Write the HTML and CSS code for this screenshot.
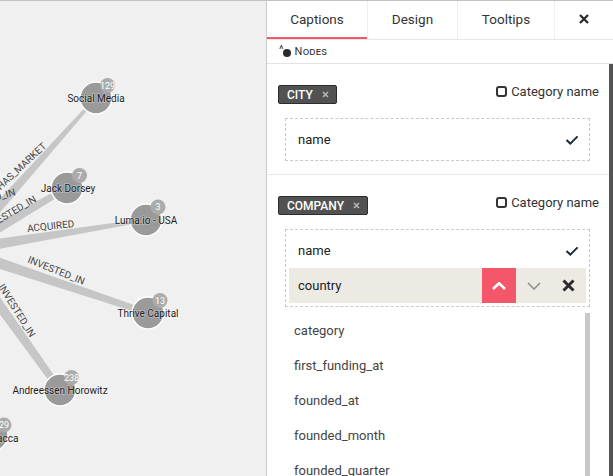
FILE: index.html
```html
<!DOCTYPE html>
<html>
<head>
<meta charset="utf-8">
<title>Graph captions</title>
<link rel="stylesheet" href="styles.css">
</head>
<body>
<div class="app">
  <div class="graph">
    <svg class="graph-svg" width="266" height="475" viewBox="0 1 266 475">
      <g class="edges">
        <polygon points="-35.5,254 97.1,99 94.9,97 -44.5,246"/>
        <polygon points="-37,255.2 68.5,190.6 65.5,185.4 -43,244.8"/>
        <polygon points="-39,255.9 146.2,221.5 145.8,218.5 -41,244.1"/>
        <polygon points="-41.9,255.7 147.05,315.84 148.95,310.16 -38.1,244.3"/>
        <polygon points="-44.9,253.5 57.15,392.03 62.85,387.97 -35.1,246.5"/>
      </g>
      <g class="edge-labels">
        <text text-anchor="end" transform="translate(47 147) rotate(-43)">HAS_MARKET</text>
        <text text-anchor="end" transform="translate(16 195) rotate(-16)">INVESTED_IN</text>
        <text text-anchor="end" transform="translate(37 201) rotate(-31)">INVESTED_IN</text>
        <text text-anchor="middle" transform="translate(51 229.5) rotate(-6)">ACQUIRED</text>
        <text text-anchor="middle" transform="translate(55 273.5) rotate(22)">INVESTED_IN</text>
        <text text-anchor="end" transform="translate(30 338) rotate(58)">INVESTED_IN</text>
      </g>
      <g class="node">
        <circle class="n-circle" cx="96" cy="98" r="16"/>
        <circle class="n-badge" cx="107.5" cy="85.5" r="7.5"/>
        <text class="n-count" x="107.5" y="88.5">129</text>
        <text class="n-label" x="96" y="101.5">Social Media</text>
      </g>
      <g class="node">
        <circle class="n-circle" cx="67" cy="188" r="16"/>
        <circle class="n-badge" cx="79.5" cy="175.5" r="7.5"/>
        <text class="n-count" x="79.5" y="178.5">7</text>
        <text class="n-label" x="68" y="191.5">Jack Dorsey</text>
      </g>
      <g class="node">
        <circle class="n-circle" cx="146" cy="220" r="16"/>
        <circle class="n-badge" cx="158" cy="207" r="7.5"/>
        <text class="n-count" x="158" y="210">3</text>
        <text class="n-label" x="146" y="223.5">Luma.io - USA</text>
      </g>
      <g class="node">
        <circle class="n-circle" cx="148" cy="313" r="16"/>
        <circle class="n-badge" cx="160" cy="300.5" r="7.5"/>
        <text class="n-count" x="160" y="303.5">13</text>
        <text class="n-label" x="148" y="316.5">Thrive Capital</text>
      </g>
      <g class="node">
        <circle class="n-circle" cx="60" cy="390" r="16"/>
        <circle class="n-badge" cx="71.5" cy="377.5" r="7.5"/>
        <text class="n-count" x="71.5" y="380.5">238</text>
        <text class="n-label" x="60" y="393.5">Andreessen Horowitz</text>
      </g>
      <g class="node">
        <circle class="n-circle" cx="-8" cy="435" r="16"/>
        <circle class="n-badge" cx="4" cy="425" r="7.5"/>
        <text class="n-count" x="4" y="428">29</text>
        <text class="n-label" x="-8" y="441.5">Chris Sacca</text>
      </g>
    </svg>
  </div>

  <div class="panel">
    <div class="tabs">
      <div class="tab tab-captions active">Captions</div>
      <div class="tab tab-design">Design</div>
      <div class="tab tab-tooltips">Tooltips</div>
      <div class="tab tab-close">
        <svg width="10" height="10" viewBox="0 0 10 10"><path d="M1 1L9 9M9 1L1 9" class="ico-close"/></svg>
      </div>
    </div>
    <div class="nodes-hd">
      <span class="nodes-icon"><span class="caret">^</span><span class="dot"></span></span>
      <span class="nodes-title">Nodes</span>
    </div>
    <div class="panel-body">
      <div class="scroll">
        <section class="cat">
          <div class="cat-head">
            <span class="tag">CITY <svg class="tag-x" width="7" height="7" viewBox="0 0 7 7"><path d="M1 1L6 6M6 1L1 6"/></svg></span>
            <label class="cb"><span class="box"></span>Category name</label>
          </div>
          <div class="props">
            <div class="prop">
              <span class="prop-name">name</span>
              <svg class="chk" width="14" height="10" viewBox="0 0 14 10"><polyline points="1.5,5 5.3,8.6 12.6,1.4"/></svg>
            </div>
          </div>
        </section>
        <section class="cat cat-company">
          <div class="cat-head">
            <span class="tag">COMPANY <svg class="tag-x" width="7" height="7" viewBox="0 0 7 7"><path d="M1 1L6 6M6 1L1 6"/></svg></span>
            <label class="cb"><span class="box"></span>Category name</label>
          </div>
          <div class="props">
            <div class="prop">
              <span class="prop-name">name</span>
              <svg class="chk" width="14" height="10" viewBox="0 0 14 10"><polyline points="1.5,5 5.3,8.6 12.6,1.4"/></svg>
            </div>
            <div class="prop prop-sel">
              <span class="prop-name">country</span>
              <span class="btn btn-up"><svg width="14" height="8" viewBox="0 0 14 8"><polyline points="1,7 7,1.2 13,7"/></svg></span>
              <span class="btn btn-down"><svg width="14" height="8" viewBox="0 0 14 8"><polyline points="1,1 7,7 13,1"/></svg></span>
              <span class="btn btn-del"><svg width="13" height="13" viewBox="0 0 13 13"><path d="M1.5 1.5L11.5 11.5M11.5 1.5L1.5 11.5"/></svg></span>
            </div>
          </div>
          <div class="dropdown">
            <ul class="dd-list">
              <li>category</li>
              <li>first_funding_at</li>
              <li>founded_at</li>
              <li>founded_month</li>
              <li>founded_quarter</li>
              <li>founded_year</li>
            </ul>
            <div class="dd-scroll"></div>
          </div>
        </section>
      </div>
      <div class="sbar"></div>
    </div>
  </div>
</div>
</body>
</html>
```
FILE: styles.css
```css
html, body {
  margin: 0;
  padding: 0;
}
body {
  border-top: 1px solid #c2c2c2;
  height: 475px;
  overflow: hidden;
  font-family: Roboto, "Noto Sans", sans-serif;
  background: #fff;
}
.app {
  display: flex;
  height: 475px;
}

/* graph canvas */
.graph {
  width: 266px;
  flex: none;
  background: #f0f0f0;
  overflow: hidden;
}
.graph-svg {
  display: block;
  font-family: Roboto, sans-serif;
}
.edges polygon {
  fill: #c6c6c6;
}
.edge-labels text {
  font-size: 10px;
  fill: #454545;
}
.n-circle {
  fill: #9a9a9a;
  stroke: #ffffff;
  stroke-width: 1.5;
}
.n-badge {
  fill: #ababab;
}
.n-count {
  font-size: 9px;
  fill: #ffffff;
  text-anchor: middle;
}
.n-label {
  font-size: 10px;
  fill: #1c1c1c;
  text-anchor: middle;
  stroke: rgba(255, 255, 255, 0.35);
  stroke-width: 1.5;
  paint-order: stroke;
}

/* side panel */
.panel {
  width: 346px;
  flex: none;
  border-left: 1px solid #cbcbcb;
  background: #fff;
  display: flex;
  flex-direction: column;
}
.tabs {
  display: flex;
  height: 38px;
  flex: none;
  border-bottom: 1px solid #e6e6e6;
}
.tab {
  box-sizing: border-box;
  display: flex;
  align-items: center;
  justify-content: center;
  font-size: 13.5px;
  color: #333;
  border-right: 1px solid #efefef;
  padding-bottom: 3px;
}
.tab-captions { width: 101px; }
.tab-design { width: 90px; }
.tab-tooltips { width: 97px; }
.tab-close { flex: 1; border-right: none; }
.active {
  box-shadow: inset 0 -2px 0 #f4566a;
}
.ico-close {
  stroke: #2b2b2b;
  stroke-width: 2.3;
  fill: none;
}

.nodes-hd {
  height: 23px;
  flex: none;
  border-bottom: 1px solid #e3e3e3;
  display: flex;
  align-items: center;
  padding-left: 12px;
  font-size: 11px;
  color: #333;
}
.nodes-icon {
  display: flex;
  align-items: flex-start;
  height: 12px;
}
.caret {
  font-size: 11px;
  line-height: 10px;
  margin-top: -1px;
}
.dot {
  width: 8px;
  height: 8px;
  border-radius: 50%;
  background: #2a2a2a;
  margin-top: 3px;
  margin-left: -1px;
}
.nodes-title {
  font-variant: small-caps;
  margin-left: 4px;
  letter-spacing: 0.2px;
}

.panel-body {
  flex: 1;
  min-height: 0;
  display: flex;
}
.scroll {
  flex: 1;
  overflow: hidden;
}
.sbar {
  width: 4px;
  flex: none;
  background: #545454;
}

.cat {
  padding: 21px 10px 13px 11px;
  border-bottom: 1px solid #e8e8e8;
}
.cat-company {
  border-bottom: none;
}
.cat-head {
  display: flex;
  justify-content: space-between;
  align-items: flex-start;
}
.tag {
  box-sizing: border-box;
  display: inline-flex;
  align-items: center;
  gap: 9px;
  height: 19px;
  padding: 0 7px 0 8px;
  background: #525252;
  border: 1px solid #2d2d2d;
  border-radius: 2px;
  color: #fff;
  font-size: 12px;
  font-weight: 500;
}
.tag-x path {
  stroke: #b4b4b4;
  stroke-width: 1.7;
  fill: none;
}
.cb {
  display: flex;
  align-items: center;
  gap: 4px;
  font-size: 13px;
  line-height: 13px;
  color: #333;
}
.box {
  box-sizing: border-box;
  width: 11px;
  height: 11px;
  border: 2px solid #333;
  border-radius: 3px;
}

.props {
  margin: 14px 9px 0 7px;
  border: 1px dashed #c9c9c9;
  padding: 3px;
}
.prop {
  height: 35px;
  display: flex;
  align-items: center;
  padding-left: 9px;
  font-size: 13px;
  color: #222;
}
.prop-name {
  flex: 1;
}
.chk {
  margin-right: 7px;
}
.chk polyline {
  fill: none;
  stroke: #1d2b3a;
  stroke-width: 2;
}
.prop-sel {
  background: #edeae4;
}
.btn {
  width: 35px;
  height: 35px;
  display: flex;
  align-items: center;
  justify-content: center;
}
.btn-up {
  width: 34px;
  background: #f4566a;
}
.btn-up polyline {
  fill: none;
  stroke: #fff;
  stroke-width: 2.6;
}
.btn-down polyline {
  fill: none;
  stroke: #8c8c8c;
  stroke-width: 1.5;
}
.btn-del path {
  fill: none;
  stroke: #2b2b2b;
  stroke-width: 3;
}

.dropdown {
  margin: 6px 9px 0 7px;
  display: flex;
  background: #fff;
  height: 220px;
}
.dd-list {
  flex: 1;
  list-style: none;
  margin: 0;
  padding: 0;
}
.dd-list li {
  height: 35px;
  line-height: 35px;
  padding-left: 9px;
  font-size: 13px;
  color: #444;
}
.dd-scroll {
  width: 5px;
  flex: none;
  background: #c8c8c8;
}
```
